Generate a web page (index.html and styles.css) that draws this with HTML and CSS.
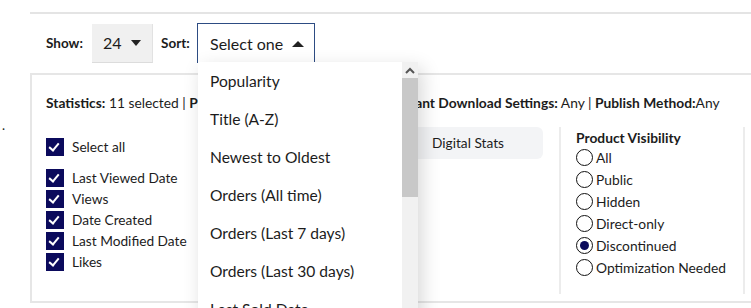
FILE: index.html
```html
<!DOCTYPE html>
<html lang="en">
<head>
    <meta charset="UTF-8">
    <meta name="viewport" content="width=device-width, initial-scale=1.0">
    <title>Products</title>
    <link rel="stylesheet" href="styles.css">
</head>
<body>
    <div class="gutter">.</div>
    <main class="content">
        <div class="topline"></div>

        <!-- Barre de tri / affichage -->
        <div class="toolbar">
            <span class="lbl show-lbl">Show:</span>
            <div class="show-box">24 <span class="caret-down"></span></div>
            <span class="lbl sort-lbl">Sort:</span>
            <div class="sort">
                <div class="sort-box">Select one <span class="caret-up"></span></div>
                <div class="sort-menu">
                    <ul>
                        <li>Popularity</li>
                        <li>Title (A-Z)</li>
                        <li>Newest to Oldest</li>
                        <li>Orders (All time)</li>
                        <li>Orders (Last 7 days)</li>
                        <li>Orders (Last 30 days)</li>
                        <li>Last Sold Date</li>
                    </ul>
                    <div class="scrollbar">
                        <div class="scroll-up">
                            <svg width="10" height="7" viewBox="0 0 10 7"><path d="M1 6 L5 2 L9 6" fill="none" stroke="#555" stroke-width="2"/></svg>
                        </div>
                        <div class="scroll-thumb"></div>
                    </div>
                </div>
            </div>
        </div>

        <!-- Panneau des filtres -->
        <section class="panel">
            <p class="summary">
                <b>Statistics:</b> 11 selected | <b>Product Visibility:</b> Discontinued | <b>Instant Download Settings:</b> Any | <b>Publish Method:</b>Any
            </p>
            <div class="filters">
                <div class="checks">
                    <label class="check all"><span class="box"></span>Select all</label>
                    <label class="check"><span class="box"></span>Last Viewed Date</label>
                    <label class="check"><span class="box"></span>Views</label>
                    <label class="check"><span class="box"></span>Date Created</label>
                    <label class="check"><span class="box"></span>Last Modified Date</label>
                    <label class="check"><span class="box"></span>Likes</label>
                </div>
                <div class="tabs">
                    <div class="tab">Digital Stats</div>
                </div>
                <div class="visibility">
                    <h3>Product Visibility</h3>
                    <label class="radio"><span class="dot"></span>All</label>
                    <label class="radio"><span class="dot"></span>Public</label>
                    <label class="radio"><span class="dot"></span>Hidden</label>
                    <label class="radio"><span class="dot"></span>Direct-only</label>
                    <label class="radio on"><span class="dot"></span>Discontinued</label>
                    <label class="radio"><span class="dot"></span>Optimization Needed</label>
                </div>
            </div>
        </section>
    </main>
</body>
</html>
```

FILE: styles.css
```css
body {
    font-family: Lato, "Open Sans", sans-serif;
    color: #1c1c1c;
    margin: 0;
    padding: 0;
    display: flex;
    overflow: hidden;
    height: 308px;
}

.gutter {
    width: 30px;
    flex: none;
    padding: 117px 0 0 2px;
    box-sizing: border-box;
    font-size: 13px;
}

.content {
    flex: 1;
    min-width: 0;
}

.topline {
    margin-top: 12px;
    border-top: 2px solid #e4e4e4;
}

.toolbar {
    display: flex;
    align-items: center;
    padding: 9px 0 0 16px;
    height: 40px;
}

.lbl {
    font-size: 13.5px;
    font-weight: bold;
}

.show-lbl {
    width: 46px;
}

.sort-lbl {
    width: 36px;
}

.show-box {
    width: 61px;
    height: 39px;
    box-sizing: border-box;
    background-color: #f0f0f0;
    border-right: 1px solid #e2e2e2;
    border-bottom: 1px solid #dcdcdc;
    font-size: 16px;
    display: flex;
    align-items: center;
    padding-left: 11px;
    margin-right: 8px;
}

.caret-down {
    margin-left: 9px;
    border-left: 5px solid transparent;
    border-right: 5px solid transparent;
    border-top: 6px solid #222;
}

.caret-up {
    margin-left: 9px;
    border-left: 6px solid transparent;
    border-right: 6px solid transparent;
    border-bottom: 6px solid #222;
}

.sort {
    position: relative;
}

.sort-box {
    width: 118px;
    height: 40px;
    box-sizing: border-box;
    border: 1px solid #2d4c83;
    border-bottom: none;
    font-size: 16px;
    display: flex;
    align-items: center;
    padding-left: 12px;
}

.sort-menu {
    position: absolute;
    top: 39px;
    left: 1px;
    width: 220px;
    height: 260px;
    background-color: #fff;
    box-shadow: 4px 6px 18px rgba(0, 0, 0, 0.16);
    z-index: 5;
    display: flex;
}

.sort-menu ul {
    list-style: none;
    margin: 0;
    padding: 0;
    flex: 1;
}

.sort-menu li {
    height: 38px;
    line-height: 38px;
    padding-left: 12px;
    font-size: 15.6px;
    white-space: nowrap;
}

.scrollbar {
    width: 16px;
    background-color: #f1f1f1;
}

.scroll-up {
    height: 16px;
    display: flex;
    align-items: center;
    justify-content: center;
}

.scroll-thumb {
    height: 119px;
    background-color: #c8c8c8;
}

.panel {
    margin-top: 10px;
    height: 230px;
    box-sizing: border-box;
    border: 2px solid #e6e6e6;
    border-right: none;
    padding: 19px 0 0 14px;
    width: 730px;
}

.summary {
    margin: 0;
    font-size: 13.8px;
    line-height: 17px;
    white-space: nowrap;
}

.filters {
    display: flex;
    margin-top: 16px;
}

.checks {
    width: 354px;
    padding-top: 9px;
}

.check {
    display: flex;
    align-items: center;
    height: 21px;
    font-size: 13.7px;
}

.check.all {
    margin-bottom: 10px;
}

.box {
    width: 18px;
    height: 18px;
    margin-right: 8px;
    background-color: #0b0a5c;
    position: relative;
}

.box::after {
    content: "";
    position: absolute;
    left: 5px;
    top: 3px;
    width: 4px;
    height: 8px;
    border-right: 2.5px solid #fff;
    border-bottom: 2.5px solid #fff;
    transform: rotate(40deg);
}

.tabs {
    width: 143px;
    height: 167px;
}

.tab {
    background-color: #f3f4f6;
    border-radius: 0 6px 6px 0;
    height: 32px;
    line-height: 31px;
    font-size: 13.7px;
    padding-left: 32px;
}

.visibility {
    margin-left: 16px;
    border-left: 2px solid #ececec;
    border-right: 2px solid #ececec;
    padding-left: 15px;
    width: 186px;
    height: 167px;
    box-sizing: border-box;
}

.visibility h3 {
    margin: 3px 0 1px;
    font-size: 13.8px;
    line-height: 15px;
}

.radio {
    display: flex;
    align-items: center;
    height: 22px;
    font-size: 13.8px;
    white-space: nowrap;
}

.dot {
    width: 15px;
    height: 15px;
    flex: none;
    border: 1.5px solid #111;
    border-radius: 50%;
    margin-right: 3px;
    position: relative;
}

.radio.on .dot::after {
    content: "";
    position: absolute;
    left: 3px;
    top: 3px;
    width: 9px;
    height: 9px;
    border-radius: 50%;
    background-color: #0b0a5c;
}
```
